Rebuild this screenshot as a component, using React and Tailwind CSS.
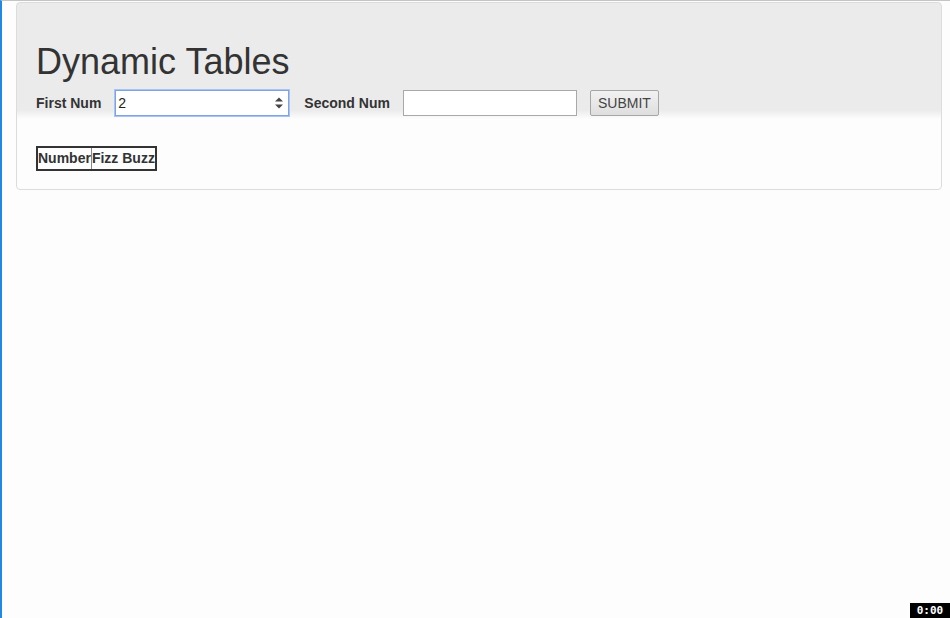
import {useState} from 'react';

const App = () => {
  const [first, setFirst] = useState('2');
  const [second, setSecond] = useState('');

  return (
    <div className="relative h-[618px] w-[950px] overflow-hidden bg-[#fdfdfd] font-['Liberation_Sans',Arial,sans-serif] text-[#333]">
      <div className="border-l-2 border-t border-l-[#1e88e5] border-t-[#c4c4c4] h-full pl-[14px] pr-[8px] pt-[1px]">
        <div className="rounded border border-[#dcdcdc] bg-[linear-gradient(to_bottom,#ebebeb_0px,#ebebeb_107px,#fdfdfd_116px)]">
          <div className="px-[19px] pt-[37px] pb-[18px]">
            <h1 className="text-[36px] leading-[44px] font-normal text-[#333]">Dynamic Tables</h1>
            <div className="mt-[6px] flex items-center">
              <label className="text-[14px] font-bold mr-[14px]">First Num</label>
              <div className="relative">
                <input
                  type="number"
                  value={first}
                  onChange={(e) => setFirst(e.target.value)}
                  className="h-[26px] w-[174px] border border-[#7aa3e8] bg-white px-[2px] text-[14px] text-[#222] outline-none shadow-[0_0_0_1px_#a9c4f2] [appearance:textfield] [&::-webkit-inner-spin-button]:appearance-none [&::-webkit-outer-spin-button]:appearance-none"
                />
                <svg className="absolute right-[5px] top-[6px]" width="10" height="14" viewBox="0 0 10 14">
                  <path d="M1 5.5 L5 1.5 L9 5.5 Z" fill="#444" />
                  <path d="M1 8.5 L5 12.5 L9 8.5 Z" fill="#444" />
                </svg>
              </div>
              <label className="ml-[15px] mr-[13px] text-[14px] font-bold">Second Num</label>
              <input
                type="text"
                value={second}
                onChange={(e) => setSecond(e.target.value)}
                className="h-[26px] w-[174px] border border-[#a9a9a9] bg-white px-[2px] text-[14px] outline-none"
              />
              <button className="ml-[13px] h-[26px] w-[69px] border border-[#a6a6a6] bg-[linear-gradient(to_bottom,#f2f2f2,#dedede)] text-[14px] text-[#444] rounded-[2px]">
                SUBMIT
              </button>
            </div>
            <table className="mt-[30px] border-2 border-[#333] border-collapse">
              <thead>
                <tr>
                  <th className="border-r border-[#888] px-0 py-[1px] text-[14px] font-bold leading-[19px]">Number</th>
                  <th className="px-0 py-[1px] text-[14px] font-bold leading-[19px]">Fizz Buzz</th>
                </tr>
              </thead>
            </table>
          </div>
        </div>
      </div>
      <div className="absolute right-0 bottom-0 h-[15px] w-[40px] bg-black text-white font-['DejaVu_Sans_Mono',monospace] text-[11px] font-bold leading-[15px] text-center">
        0:00
      </div>
    </div>
  );
};

export default App;
